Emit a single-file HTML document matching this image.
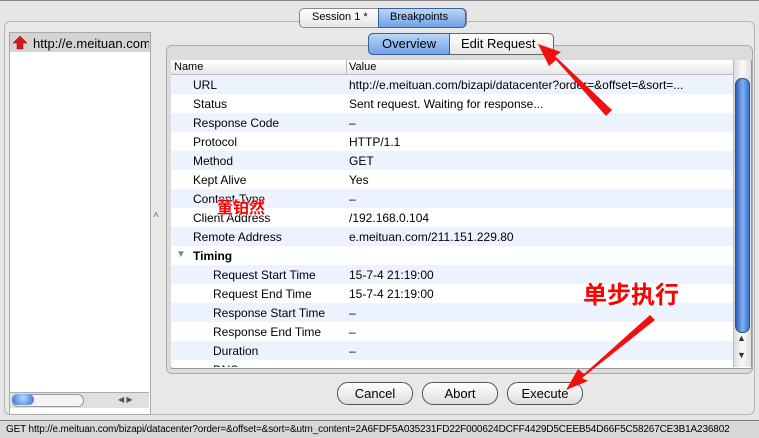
<!DOCTYPE html><html><head><style>
body{margin:0;width:759px;height:437px;overflow:hidden;background:#e6e6e6;font-family:"Liberation Sans",sans-serif;font-size:12px;position:relative}
.a{position:absolute}
.row{position:absolute;left:171px;width:562px;height:19px}
.row span{position:absolute;top:3px}
</style></head><body>
<div class="a" style="left:0;top:0;width:759px;height:1px;background:#888"></div>
<div class="a" style="left:4px;top:21px;width:749px;height:392px;border:1px solid #b5b5b5;border-radius:6px;background:#e8e8e8"></div>
<div class="a" style="left:299px;top:8px;width:166px;height:18px;border:1px solid #888;border-radius:5px;background:linear-gradient(#fff,#e6e6e6)"></div>
<div class="a" style="left:378px;top:8px;width:86px;height:18px;border:1px solid #3a5f9e;border-radius:0 5px 5px 0;background:linear-gradient(#bcd6f6,#6fa2e8)"></div>
<div class="a" style="left:312px;top:11px;font-size:11px">Session 1 *</div>
<div class="a" style="left:390px;top:11px;font-size:11px">Breakpoints</div>
<div class="a" style="left:9px;top:32px;width:140px;height:381px;background:#fff;border:1px solid #aaa"></div>
<div class="a" style="left:10px;top:33px;width:140px;height:19px;background:#d4d4d4"></div>
<svg class="a" style="left:12px;top:35px" width="16" height="15"><path d="M8 1 L15 8 L11 8 L11 14 L5 14 L5 8 L1 8Z" fill="#d21a1a" stroke="#900" stroke-width=".5"/></svg>
<div class="a" style="left:33px;top:36px;width:116px;overflow:hidden;white-space:nowrap;font-size:13px">http://e.meituan.com</div>
<div class="a" style="left:10px;top:392px;width:139px;height:15px;background:#e0e0e0;border-top:1px solid #aaa"></div>
<div class="a" style="left:12px;top:394px;width:70px;height:11px;border-radius:6px;border:1px solid #999;background:#f4f4f4"></div>
<div class="a" style="left:12px;top:394px;width:22px;height:11px;border-radius:6px;background:radial-gradient(circle at 50% 35%,#b8d6ff,#2e6fd6)"></div>
<div class="a" style="left:118px;top:395px;font-size:8px;color:#555">◀ ▶</div>
<div class="a" style="left:153px;top:210px;font-size:10px;color:#666">˄</div>
<div class="a" style="left:166px;top:45px;width:585px;height:327px;border:1px solid #aaa;border-radius:6px;background:#dcdcdc"></div>
<div class="a" style="left:368px;top:33px;width:184px;height:20px;border:1px solid #666;border-radius:5px;background:linear-gradient(#fff,#e6e6e6)"></div>
<div class="a" style="left:368px;top:33px;width:80px;height:20px;border:1px solid #3a5f9e;border-radius:5px 0 0 5px;background:linear-gradient(#bcd6f6,#6fa2e8)"></div>
<div class="a" style="left:382px;top:36px;font-size:13px">Overview</div>
<div class="a" style="left:461px;top:36px;font-size:13px">Edit Request</div>
<div class="a" style="left:171px;top:60px;width:579px;height:307px;background:#fff;border:1px solid #999;overflow:hidden">
</div>
<div class="a" style="left:171px;top:60px;width:562px;height:14px;background:linear-gradient(#fff,#e8e8e8);border-bottom:1px solid #bbb;font-size:11px"><span class="a" style="left:3px;top:1px">Name</span><span class="a" style="left:178px;top:1px">Value</span></div>
<div class="a" style="left:346px;top:60px;width:1px;height:307px;background:#bbb"></div>
<div id="rows"></div>
<div class="a" style="left:733px;top:60px;width:17px;height:307px;background:linear-gradient(90deg,#ddd,#fafafa,#ddd);border-left:1px solid #bbb"></div>
<div class="a" style="left:735px;top:78px;width:13px;height:253px;border-radius:7px;background:linear-gradient(90deg,#2d5fb8,#7fb0f0,#3a74d0);border:1px solid #2a4f8f"></div>
<div class="a" style="left:737px;top:333px;font-size:9px;color:#333">▲</div>
<div class="a" style="left:737px;top:350px;font-size:9px;color:#333">▼</div>
<div class="a" style="left:337px;top:382px;width:74px;height:21px;border:1px solid #555;border-radius:11px;background:linear-gradient(#fff,#ddd);text-align:center;line-height:21px;font-size:13px">Cancel</div>
<div class="a" style="left:422px;top:382px;width:74px;height:21px;border:1px solid #555;border-radius:11px;background:linear-gradient(#fff,#ddd);text-align:center;line-height:21px;font-size:13px">Abort</div>
<div class="a" style="left:507px;top:382px;width:74px;height:21px;border:1px solid #555;border-radius:11px;background:linear-gradient(#fff,#ddd);text-align:center;line-height:21px;font-size:13px">Execute</div>
<div class="a" style="left:0;top:420px;width:759px;height:17px;background:#d8d8d8;border-top:1px solid #777"></div>
<div class="a" style="left:6px;top:424px;font-size:10px;white-space:nowrap;letter-spacing:-0.15px">GET http://e.meituan.com/bizapi/datacenter?order=&amp;offset=&amp;sort=&amp;utm_content=2A6FDF5A035231FD22F000624DCFF4429D5CEEB54D66F5C58267CE3B1A236802</div>
<div class="a" style="left:217px;top:194px;color:#f00;font-weight:bold;font-size:16px;font-family:'Noto Sans CJK SC',sans-serif;text-shadow:0 0 2px #fff,0 0 2px #fff">董铂然</div>
<div class="a" style="left:583px;top:275px;color:#f00;font-weight:bold;font-size:24px;font-family:'Noto Sans CJK SC',sans-serif;text-shadow:0 0 3px #fff,0 0 3px #fff">单步执行</div>
<svg class="a" style="left:0;top:0" width="759" height="437"><polygon points="612,110 606,116 556,60 549,66 538,44 561,52 555,56" fill="#f01010"/><polygon points="655,320 650,315 584,374 578,369 566,390 588,381 582,378" fill="#f01010"/></svg>
<script>
var r=[["URL","http://e.meituan.com/bizapi/datacenter?order=&offset=&sort=...",0],["Status","Sent request. Waiting for response...",0],["Response Code","–",0],["Protocol","HTTP/1.1",0],["Method","GET",0],["Kept Alive","Yes",0],["Content-Type","–",0],["Client Address","/192.168.0.104",0],["Remote Address","e.meituan.com/211.151.229.80",0],["Timing","",2],["Request Start Time","15-7-4 21:19:00",1],["Request End Time","15-7-4 21:19:00",1],["Response Start Time","–",1],["Response End Time","–",1],["Duration","–",1],["DNS","",1]];
var h="";r.forEach(function(x,i){var t=75+i*19;var hh=Math.min(19,367-t);h+='<div class="row" style="top:'+t+'px;height:'+hh+'px;overflow:hidden;background:'+(i%2?'#fff':'#edf3fe')+'"><span style="left:'+(x[2]==1?42:22)+'px;'+(x[2]==2?'font-weight:bold':'')+'">'+x[0]+'</span>'+(x[2]==2?'<span style="left:5px;color:#888;font-size:10px">▼</span>':'')+'<span style="left:178px;white-space:nowrap">'+x[1].replace(/&/g,'&amp;')+'</span></div>'});
document.getElementById("rows").innerHTML=h;
</script>
</body></html>
